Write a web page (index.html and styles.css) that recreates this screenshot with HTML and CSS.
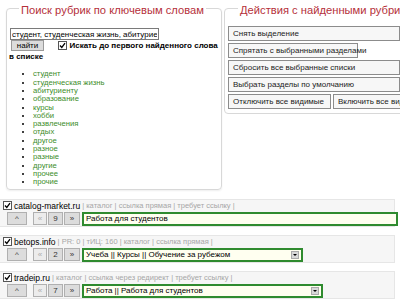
FILE: index.html
```html
<!DOCTYPE html>
<html lang="ru">
<head>
    <meta charset="UTF-8">
    <title>Поиск рубрик</title>
    <link rel="stylesheet" href="styles.css">
</head>
<body>

    <div class="top">
        <!-- Поиск по ключевым словам -->
        <fieldset class="search">
            <legend>Поиск рубрик по ключевым словам</legend>
            <input type="text" class="keywords" value="студент, студенческая жизнь, абитуриент">
            <p class="opts">
                <button class="find">найти</button>
                <span class="cb"><svg width="7" height="7" viewBox="0 0 7 7"><path d="M1 3.5 L2.8 5.5 L6 1.2" fill="none" stroke="#000" stroke-width="1.3"/></svg></span>
                <b>Искать до первого найденного слова в списке</b>
            </p>
            <ul class="words">
                <li>студент</li>
                <li>студенческая жизнь</li>
                <li>абитуриенту</li>
                <li>образование</li>
                <li>курсы</li>
                <li>хобби</li>
                <li>развлечения</li>
                <li>отдых</li>
                <li>другое</li>
                <li>разное</li>
                <li>разные</li>
                <li>другие</li>
                <li>прочее</li>
                <li>прочие</li>
            </ul>
        </fieldset>

        <!-- Действия -->
        <fieldset class="actions">
            <legend>Действия с найденными рубриками</legend>
            <button class="act">Снять выделение</button>
            <button class="act short">Спрятать с выбранными разделами</button>
            <button class="act">Сбросить все выбранные списки</button>
            <button class="act">Выбрать разделы по умолчанию</button>
            <div class="pair">
                <button class="act half">Отключить все видимые</button>
                <button class="act half">Включить все видимые</button>
            </div>
        </fieldset>
    </div>

    <!-- Каталоги -->
    <div class="site">
        <div class="head">
            <span class="cb"><svg width="7" height="7" viewBox="0 0 7 7"><path d="M1 3.5 L2.8 5.5 L6 1.2" fill="none" stroke="#000" stroke-width="1.3"/></svg></span>
            <span class="name">catalog-market.ru</span>
            <span class="meta">| каталог | ссылка прямая | требует ссылку |</span>
        </div>
        <div class="row">
            <button class="up">^</button>
            <button class="prev">«</button>
            <button class="num">9</button>
            <button class="next">»</button>
            <input type="text" class="rubric wide" value="Работа для студентов">
        </div>
    </div>

    <div class="site">
        <div class="head">
            <span class="cb"><svg width="7" height="7" viewBox="0 0 7 7"><path d="M1 3.5 L2.8 5.5 L6 1.2" fill="none" stroke="#000" stroke-width="1.3"/></svg></span>
            <span class="name">betops.info</span>
            <span class="meta">| PR: 0 | тИЦ: 160 | каталог | ссылка прямая |</span>
        </div>
        <div class="row">
            <button class="up">^</button>
            <button class="prev">«</button>
            <button class="num">2</button>
            <button class="next">»</button>
            <div class="rubric select s1"><span>Учеба || Курсы || Обучение за рубежом</span><i class="arrow"></i></div>
        </div>
    </div>

    <div class="site">
        <div class="head">
            <span class="cb"><svg width="7" height="7" viewBox="0 0 7 7"><path d="M1 3.5 L2.8 5.5 L6 1.2" fill="none" stroke="#000" stroke-width="1.3"/></svg></span>
            <span class="name">tradeip.ru</span>
            <span class="meta">| каталог | ссылка через редирект | требует ссылку |</span>
        </div>
        <div class="row">
            <button class="up">^</button>
            <button class="prev">«</button>
            <button class="num">7</button>
            <button class="next">»</button>
            <div class="rubric select s2"><span>Работа || Работа для студентов</span><i class="arrow"></i></div>
        </div>
    </div>

</body>
</html>
```

FILE: styles.css
```css
body {
    margin: 0;
    width: 400px;
    height: 301px;
    overflow: hidden;
    font-family: "Liberation Sans", Arial, sans-serif;
    font-size: 8px;
    color: #000;
    background-color: #fff;
}
button, input {
    font-family: "Liberation Sans", Arial, sans-serif;
    font-size: 8px;
    margin: 0;
    box-sizing: border-box;
}
.top {
    display: flex;
    align-items: flex-start;
    height: 199px;
}
fieldset {
    border: 1px solid #d8d8d8;
    border-radius: 4px;
    margin: 0;
    flex-shrink: 0;
}
legend {
    color: #b5303a;
    font-size: 11.2px;
    line-height: 12px;
    padding: 4px 2px 0 2px;
    margin-left: 10px;
    white-space: nowrap;
}
.search {
    margin-left: 6px;
    width: 216px;
    height: 190px;
    box-sizing: border-box;
    padding: 12px 2px 0 2px;
    box-shadow: 0 1px 2px #eee;
}
.keywords {
    display: block;
    width: 149px;
    height: 12px;
    padding: 0 1px;
    border: 1px solid #7a7a7a;
    font-size: 8px;
    margin-left: 1px;
}
.opts {
    margin: 0;
    line-height: 11px;
    font-size: 8px;
}
.find {
    width: 33px;
    height: 11px;
    padding: 0;
    margin-left: 2px;
    margin-right: 12px;
    background-color: #dcdcdc;
    border: 1px solid #9a9a9a;
    vertical-align: middle;
}
.cb {
    display: inline-block;
    width: 7px;
    height: 7px;
    border: 1px solid #555;
    background-color: #fff;
    vertical-align: middle;
    line-height: 0;
}
.words {
    margin: 8px 0 0 0;
    padding-left: 24px;
    color: #3d8d2a;
    line-height: 8.3px;
    font-size: 7.7px;
}
.words li::marker {
    color: #000;
}
.actions {
    margin-left: 2px;
    width: 200px;
    box-sizing: border-box;
    padding: 10px 3px 2px 3px;
}
.act {
    display: block;
    width: 172px;
    height: 15px;
    margin-bottom: 2px;
    padding: 0 4px;
    text-align: left;
    white-space: nowrap;
    background-color: #f7f7f7;
    border: 1px solid #8c8c8c;
    color: #222;
}
.act.short {
    width: 130px;
}
.pair {
    display: flex;
    gap: 2px;
}
.act.half {
    width: 103px;
}
.site {
    width: 395px;
    box-sizing: border-box;
    background-color: #f6f6f6;
    border: 1px solid #e6e6e6;
    border-left: none;
    padding: 0 0 1px 3px;
    margin-bottom: 8px;
}
.head {
    height: 11px;
    display: flex;
    align-items: center;
    gap: 2px;
    white-space: nowrap;
}
.name {
    font-size: 8.5px;
}
.meta {
    color: #a6a6a6;
    font-size: 7.5px;
}
.row {
    display: flex;
    align-items: center;
    height: 13px;
    margin-top: 1px;
}
.row button {
    height: 13px;
    padding: 0;
    background-color: #dcdcdc;
    border: 1px solid #b0b0b0;
    color: #333;
}
.up {
    width: 20px;
    margin-left: 4px;
}
.prev {
    width: 14px;
    margin-left: 6px;
    color: #aaa !important;
    background-color: #ececec !important;
}
.num {
    width: 15px;
    margin-left: 1px;
}
.next {
    width: 16px;
    margin-left: 1px;
}
.rubric {
    margin-left: 2px;
    height: 14px;
    box-sizing: border-box;
    border: 2px solid #2f8b2f;
    background-color: #fffff0;
    padding: 0 2px;
    font-size: 8px;
}
.rubric.wide {
    width: 316px;
    margin-right: -30px;
}
.select {
    display: flex;
    align-items: center;
    justify-content: space-between;
    line-height: 10px;
}
.s1 {
    width: 221px;
}
.s2 {
    width: 241px;
}
.arrow {
    width: 8px;
    height: 8px;
    background-color: #d8d8d8;
    border: 1px solid #aaa;
    box-sizing: border-box;
    position: relative;
}
.arrow::after {
    content: "";
    position: absolute;
    left: 1px;
    top: 2px;
    border-left: 2px solid transparent;
    border-right: 2px solid transparent;
    border-top: 2px solid #000;
}
```
